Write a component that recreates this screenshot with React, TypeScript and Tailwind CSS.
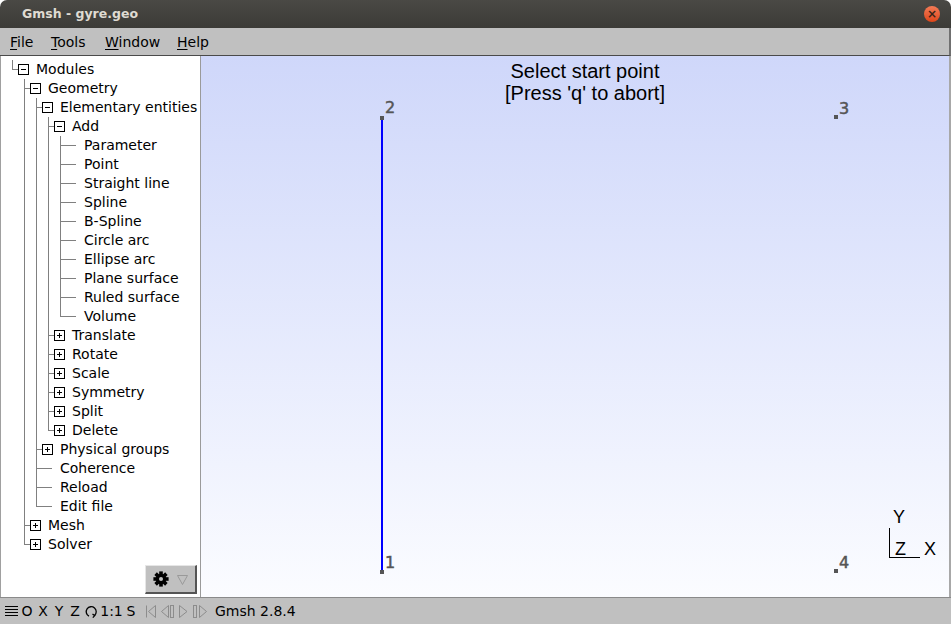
import clsx from 'clsx';

type TreeNode = { label: string; kids?: TreeNode[]; closed?: boolean };

const tree: TreeNode = {
  label: 'Modules',
  kids: [
    {
      label: 'Geometry',
      kids: [
        {
          label: 'Elementary entities',
          kids: [
            {
              label: 'Add',
              kids: ['Parameter', 'Point', 'Straight line', 'Spline', 'B-Spline', 'Circle arc', 'Ellipse arc', 'Plane surface', 'Ruled surface', 'Volume'].map(l => ({ label: l })),
            },
            ...['Translate', 'Rotate', 'Scale', 'Symmetry', 'Split', 'Delete'].map(l => ({ label: l, closed: true })),
          ],
        },
        { label: 'Physical groups', closed: true },
        { label: 'Coherence' },
        { label: 'Reload' },
        { label: 'Edit file' },
      ],
    },
    { label: 'Mesh', closed: true },
    { label: 'Solver', closed: true },
  ],
};

type Row = { node: TreeNode; guides: boolean[]; last: boolean };

function flatten(node: TreeNode, guides: boolean[], last: boolean, out: Row[]) {
  out.push({ node, guides, last });
  if (node.kids) {
    node.kids.forEach((k, i) => flatten(k, [...guides, !last], i === node.kids!.length - 1, out));
  }
  return out;
}

const rows = flatten(tree, [], true, []);

function Guide({ on }: { on: boolean }) {
  return (
    <div className="relative w-[12px] h-full shrink-0">
      {on && <div className="absolute left-[6px] top-0 bottom-0 w-px bg-[#808080]" />}
    </div>
  );
}

function Elbow({ last }: { last: boolean }) {
  return (
    <div className="relative w-[12px] h-full shrink-0">
      <div className={clsx('absolute left-[6px] top-0 w-px bg-[#808080]', last ? 'h-[10px]' : 'bottom-0')} />
      <div className="absolute left-[6px] right-0 top-[9px] h-px bg-[#808080]" />
    </div>
  );
}

function Toggle({ open }: { open: boolean }) {
  return (
    <div className="relative w-[11px] h-[11px] border border-black bg-white shrink-0">
      <div className="absolute left-[2px] top-[4px] w-[5px] h-px bg-black" />
      {!open && <div className="absolute left-[4px] top-[2px] w-px h-[5px] bg-black" />}
    </div>
  );
}

function TreeRow({ row }: { row: Row }) {
  const { node, guides, last } = row;
  return (
    <div className="flex items-center h-[19px] pl-[6px] whitespace-nowrap">
      {guides.map((g, i) => <Guide key={i} on={g} />)}
      <Elbow last={last} />
      {node.kids || node.closed ? (
        <Toggle open={!!node.kids} />
      ) : (
        <div className="relative w-[11px] h-full shrink-0">
          <div className="absolute left-0 top-[9px] w-[10px] h-px bg-[#808080]" />
        </div>
      )}
      <span className="ml-[7px] text-[14px] leading-[19px] text-black">{node.label}</span>
    </div>
  );
}

function Gear() {
  return (
    <svg width="16" height="16" viewBox="-8 -8 16 16">
      {[0, 45, 90, 135].map(a => (
        <rect key={a} x="-1.8" y="-7.6" width="3.6" height="15.2" transform={`rotate(${a})`} fill="#000" />
      ))}
      <circle r="5.2" fill="#000" />
      <circle r="2" fill="#c0c0c0" />
    </svg>
  );
}

function MenuItem({ label, w }: { label: string; w: string }) {
  return (
    <span className={w}>
      <span className="underline underline-offset-2">{label[0]}</span>
      {label.slice(1)}
    </span>
  );
}

function StatusBar() {
  const g = '#8c8c8c';
  return (
    <div className="h-[27px] border-t border-[#8a8a8a] bg-[#c0c0c0] flex items-center text-[14px] text-black whitespace-nowrap">
      <div className="w-[16px] ml-[3px] flex justify-center">
        <svg width="13" height="13" viewBox="0 0 13 13">
          {[1.5, 4.5, 7.5, 10.5].map(y => <line key={y} x1="0" x2="13" y1={y} y2={y} stroke="#000" />)}
        </svg>
      </div>
      <div className="w-[16px] text-center">O</div>
      <div className="w-[16px] text-center">X</div>
      <div className="w-[16px] text-center">Y</div>
      <div className="w-[16px] text-center">Z</div>
      <div className="w-[16px] flex justify-center">
        <svg width="13" height="13" viewBox="0 0 13 13" fill="none" stroke="#000" strokeWidth="1.3">
          <path d="M4 11.2 A5 5 0 1 1 9.5 10.5" />
          <path d="M7.5 9 L9.7 10.6 L7.8 12.6" />
        </svg>
      </div>
      <div className="w-[25px] text-center">1:1</div>
      <div className="w-[14px] text-center">S</div>
      <div className="w-[15px] ml-[5px] flex justify-center">
        <svg width="12" height="13" viewBox="0 0 12 13" fill="none" stroke={g}>
          <line x1="1.5" y1="0.5" x2="1.5" y2="12.5" />
          <path d="M10.5 0.5 L3.5 6.5 L10.5 12.5 Z" />
        </svg>
      </div>
      <div className="w-[19px] flex justify-center">
        <svg width="14" height="13" viewBox="0 0 14 13" fill="none" stroke={g}>
          <path d="M7.5 0.5 L0.5 6.5 L7.5 12.5 Z" />
          <rect x="9.5" y="0.5" width="3" height="12" />
        </svg>
      </div>
      <div className="w-[13px] flex justify-center">
        <svg width="9" height="13" viewBox="0 0 9 13" fill="none" stroke={g}>
          <path d="M0.5 0.5 L8 6.5 L0.5 12.5 Z" />
        </svg>
      </div>
      <div className="w-[19px] flex justify-center">
        <svg width="14" height="13" viewBox="0 0 14 13" fill="none" stroke={g}>
          <rect x="0.5" y="0.5" width="3" height="12" />
          <path d="M6.5 0.5 L13.5 6.5 L6.5 12.5 Z" />
        </svg>
      </div>
      <span className="ml-[6px]">Gmsh 2.8.4</span>
    </div>
  );
}

function Scene() {
  const dark = '#555555';
  const num = { fontSize: 16, fill: dark, stroke: dark, strokeWidth: 0.5, fontFamily: '"DejaVu Sans", sans-serif' };
  return (
    <svg className="absolute inset-0 w-full h-full" style={{ fontFamily: '"Liberation Sans", Arial, sans-serif' }}>
      <line x1="181" y1="62" x2="181" y2="516" stroke="#0000ff" strokeWidth="2" />
      <rect x="179" y="60" width="4" height="4" fill={dark} />
      <rect x="179" y="514" width="4" height="4" fill={dark} />
      <rect x="633" y="59" width="4" height="4" fill={dark} />
      <rect x="633" y="513" width="4" height="4" fill={dark} />
      <text x="184" y="57" {...num}>2</text>
      <text x="638" y="58" {...num}>3</text>
      <text x="184" y="512" {...num}>1</text>
      <text x="638" y="512" {...num}>4</text>
      <line x1="688.5" y1="472" x2="688.5" y2="501" stroke="#000" />
      <line x1="688" y1="501.5" x2="719" y2="501.5" stroke="#000" />
      <text x="692" y="467" fontSize="18" fill="#000">Y</text>
      <text x="694" y="499" fontSize="18" fill="#000">Z</text>
      <text x="723" y="499" fontSize="18" fill="#000">X</text>
    </svg>
  );
}

export default function App() {
  return (
    <div className="w-[951px] h-[624px] bg-white flex flex-col overflow-hidden font-['DejaVu_Sans',sans-serif]">
      <div className="h-[28px] shrink-0 rounded-t-[7px] bg-gradient-to-b from-[#4a4945] to-[#3c3b37] flex items-center justify-between pl-[22px] pr-[11px]">
        <span className="text-[12.5px] font-bold text-[#dfdbd2]">Gmsh - gyre.geo</span>
        <div className="w-[16px] h-[16px] rounded-full bg-gradient-to-b from-[#f37a55] to-[#de4516] flex items-center justify-center text-[#3b2418] text-[12px] leading-none font-bold">
          ×
        </div>
      </div>
      <div className="h-[28px] shrink-0 bg-[#c0c0c0] border-b border-[#4a4a4a] border-r-2 border-r-[#707070] flex items-center pl-[10px] pt-[1px] text-[14px] text-black">
        <MenuItem label="File" w="w-[41px]" />
        <MenuItem label="Tools" w="w-[54px]" />
        <MenuItem label="Window" w="w-[72px]" />
        <MenuItem label="Help" w="w-[40px]" />
      </div>
      <div className="h-[541px] shrink-0 flex border-l border-[#a0a0a0] border-r-2 border-r-[#a8a8a8]">
        <div className="w-[200px] shrink-0 bg-white border-r border-[#9a9a9a] flex flex-col justify-between">
          <div className="pt-[4px] -ml-px overflow-hidden">
            {rows.map((r, i) => <TreeRow key={i} row={r} />)}
          </div>
          <div className="flex justify-end pr-[3px] pb-[3px]">
            <div className="w-[52px] h-[29px] bg-[#c0c0c0] border-t border-l border-t-[#e6e6e6] border-l-[#e6e6e6] border-b-2 border-r-2 border-b-[#555] border-r-[#555] flex items-center justify-center gap-[8px]">
              <Gear />
              <svg width="11" height="11" viewBox="0 0 11 11">
                <path d="M0.5 1.5 H10.5 L5.5 10.5 Z" fill="none" stroke="#999" />
              </svg>
            </div>
          </div>
        </div>
        <div className="relative flex-1 bg-gradient-to-b from-[#cfd7fa] to-[#fbfcff] overflow-hidden">
          <Scene />
          <div className="relative pt-[4px] pl-[20px] text-center text-[20px] leading-[22px] text-black font-['Liberation_Sans',Arial,sans-serif]">
            <div>Select start point</div>
            <div>[Press 'q' to abort]</div>
          </div>
        </div>
      </div>
      <StatusBar />
    </div>
  );
}
